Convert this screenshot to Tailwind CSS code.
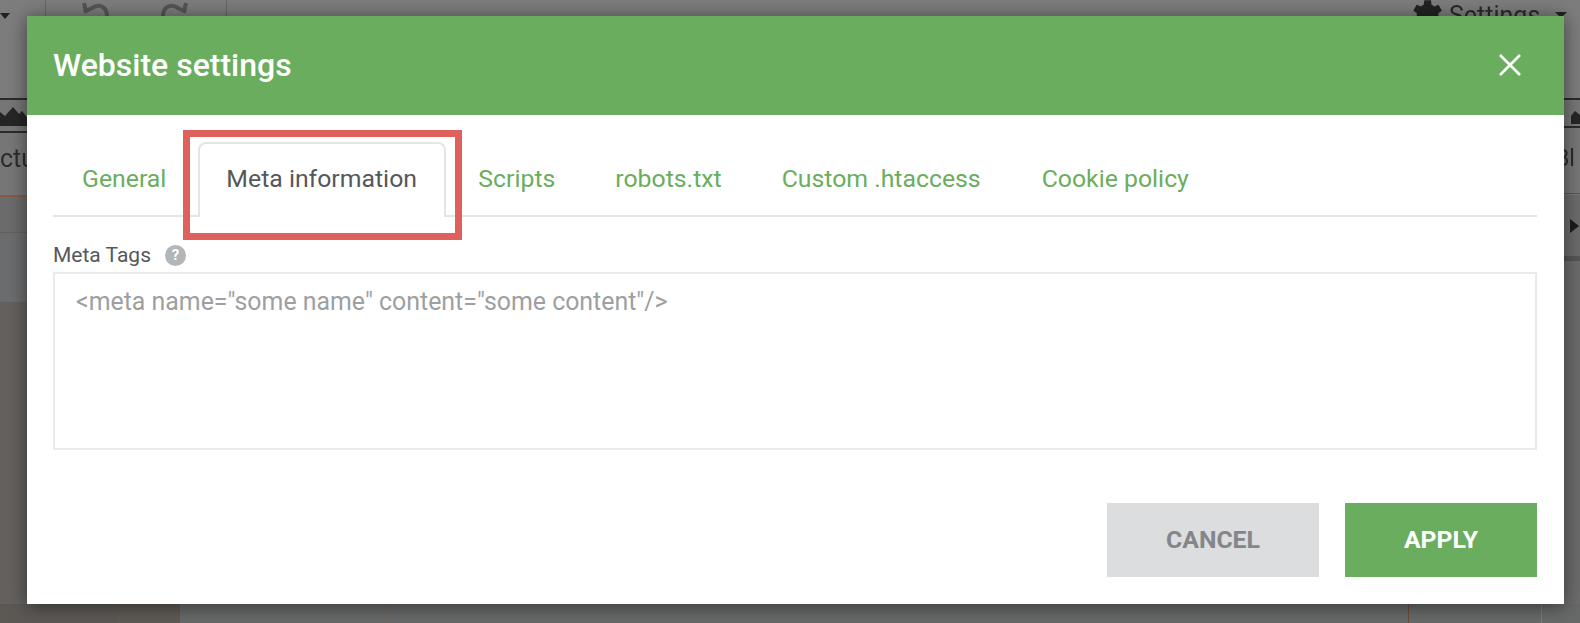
<!doctype html>
<html><head><meta charset="utf-8"><script src="https://cdn.jsdelivr.net/npm/@tailwindcss/browser@4"></script></head>
<body class="m-0">
<div class="relative w-[1580px] h-[623px] overflow-hidden bg-[#6c6c6c] font-['Roboto',sans-serif]">
  <!-- dimmed app behind the dialog -->
  <div class="absolute inset-0 blur-[0.7px]">
    <div class="absolute left-0 top-0 w-full h-[98px] bg-[#7d7d7d]"></div>
    <div class="absolute left-0 top-[98px] w-full h-[97px] bg-[#777777]"></div>
    <div class="absolute left-0 top-[232px] w-[40px] h-[70px] bg-[#6b6d6f]"></div>
    <div class="absolute left-0 top-[302px] w-[40px] h-[321px] bg-[#64615e]"></div>
    <div class="absolute left-[45px] top-0 w-px h-[16px] bg-[#666]"></div>
    <div class="absolute left-[226px] top-0 w-px h-[16px] bg-[#666]"></div>
    <svg class="absolute left-[80px] top-0 w-[32px] h-[16px]" viewBox="0 0 32 16" fill="none" stroke="#555" stroke-width="4"><path d="M4 3l2 9M4 12l8-4c7-5 15-1 15 8"/></svg>
    <svg class="absolute left-[158px] top-0 w-[32px] h-[16px]" viewBox="0 0 32 16" fill="none" stroke="#555" stroke-width="4"><path d="M28 3l-2 9M28 12l-8-4c-7-5-15-1-15 8"/></svg>
    <div class="absolute left-0 top-[13px] w-0 h-0 border-x-[5px] border-x-transparent border-t-[6px] border-t-[#222]"></div>
    <div class="absolute left-0 top-[98px] w-[27px] h-[35px] border-y-2 border-[#2b2b2b]">
      <svg class="w-[27px] h-[31px]" viewBox="0 0 27 31" fill="#262626"><path d="M0 26V12l5 4 8-9 6 7 3-3 5 6v9z"/></svg>
    </div>
    <div class="absolute left-0 top-[195px] w-[27px] h-[2px] bg-[#8a5a42]"></div>
    <div class="absolute left-0 top-[232px] w-[27px] h-px bg-[#5f6163]"></div>
    <div class="absolute left-0 top-[147px] text-[25px] leading-[24px] text-[#2c2c2c] whitespace-nowrap">ctu</div>
    <div class="absolute right-0 top-[98px] w-[16px] h-[30px] border-y-2 border-[#2b2b2b]">
      <svg class="w-[16px] h-[26px]" viewBox="0 0 16 26" fill="#262626"><path d="M7 24v-8l4-5 5 4v9z"/></svg>
    </div>
    <div class="absolute left-[1555px] top-[147px] text-[23px] leading-[24px] text-[#2c2c2c] whitespace-nowrap">Bl</div>
    <div class="absolute right-0 top-[193px] w-[16px] h-px bg-[#5a5a5a]"></div>
    <div class="absolute right-0 top-[256px] w-[16px] h-[5px] bg-[#555]"></div>
    <div class="absolute right-[1px] top-[219px] w-0 h-0 border-y-[7px] border-y-transparent border-l-[9px] border-l-[#1c1c1c]"></div>
    <div class="absolute left-0 bottom-0 w-[118px] h-[19px] bg-[#5c5955]"></div>
    <div class="absolute left-[118px] bottom-0 w-[62px] h-[19px] bg-[#5f5a54]"></div>
    <div class="absolute left-[180px] bottom-0 w-[1400px] h-[19px] bg-[#676a69]"></div>
    <div class="absolute left-[385px] bottom-0 w-[2px] h-[19px] bg-[#6f6660]"></div>
    <div class="absolute left-[1408px] top-[598px] w-px h-[25px] bg-[#6b4b35]"></div>
    <div class="absolute left-[1541px] bottom-0 w-px h-[19px] bg-[#7c7c7c]"></div>
    <svg class="absolute left-[1406px] top-[-5px] w-[40px] h-[40px]" viewBox="0 0 24 24" fill="#222"><path d="M19.4 13a7.5 7.5 0 0 0 0-2l2.100-1.600-2-3.500-2.500 1a7.500 7.500 0 0 0-1.700-1L15 3.200h-4l-.4 2.700a7.500 7.500 0 0 0-1.700 1l-2.500-1-2 3.500L6.500 11a7.500 7.500 0 0 0 0 2l-2.100 1.600 2 3.500 2.500-1a7.500 7.500 0 0 0 1.700 1l.4 2.700h4l.4-2.700a7.500 7.500 0 0 0 1.700-1l2.500 1 2-3.500z"/></svg>
    <span class="absolute left-[1449px] top-[2px] text-[25px] leading-[28px] text-[#2a2a2a]">Settings</span>
    <div class="absolute left-[1555px] top-[12px] w-0 h-0 border-x-[6px] border-x-transparent border-t-[6px] border-t-[#222]"></div>
  </div>

  <!-- dialog -->
  <div class="absolute left-[27px] top-[16px] w-[1537px] h-[588px] bg-white flex flex-col shadow-[0_2px_18px_rgba(0,0,0,0.5)]">
    <header class="h-[99px] shrink-0 bg-[#6aad5e] flex items-center justify-between pl-[26px] pr-[43px] pb-[2px]">
      <h1 class="text-[32px] font-medium text-white leading-none">Website settings</h1>
      <svg class="w-[22px] h-[22px]" viewBox="0 0 22 22" fill="none" stroke="white" stroke-width="2.6"><path d="M1 1l20 20M21 1L1 21"/></svg>
    </header>
    <div class="flex-1 flex flex-col pl-[26px] pr-[27px]">
      <nav class="relative h-[75px] mt-[27px] border-b-2 border-[#e4e5e6] flex shrink-0 text-[24.8px] leading-none text-[#6aad5e]">
        <a class="pt-[25px] pl-[29px] pr-[32px]">General</a>
        <a class="h-[75px] w-[248px] shrink-0 pl-[26px] pt-[23px] bg-white border-2 border-b-0 border-[#e4e5e6] rounded-t-[8px] text-[#55585b] whitespace-nowrap">Meta information</a>
        <a class="pt-[25px] pl-[32px] pr-[30px]">Scripts</a>
        <a class="pt-[25px] pl-[30px] pr-[30px]">robots.txt</a>
        <a class="pt-[25px] pl-[30px] pr-[31px]">Custom .htaccess</a>
        <a class="pt-[25px] pl-[30px]">Cookie policy</a>
      </nav>
      <label class="mt-[28px] flex items-center gap-[14px] text-[21px] leading-none text-[#55585b]">Meta Tags
        <span class="w-[21px] h-[21px] rounded-full bg-[#b3b5b7] text-white text-[15px] font-bold flex items-center justify-center">?</span>
      </label>
      <div class="mt-[6px] h-[178px] border-2 border-[#e9eaeb] px-[21px] pt-[14px] text-[24.9px] leading-[28px] text-[#9d9fa1]">&lt;meta name="some name" content="some content"/&gt;</div>
      <div class="mt-[53px] flex justify-end gap-[26px]">
        <button class="w-[212px] h-[74px] bg-[#dcddde] text-[#83868a] text-[24.8px] font-bold">CANCEL</button>
        <button class="w-[192px] h-[74px] bg-[#6aad5e] text-white text-[24.8px] font-bold">APPLY</button>
      </div>
    </div>
  </div>
  <!-- annotation highlight -->
  <div class="absolute left-[183px] top-[130px] w-[279px] h-[110px] border-[7px] border-[#e0605c]"></div>
</div>
</body></html>
